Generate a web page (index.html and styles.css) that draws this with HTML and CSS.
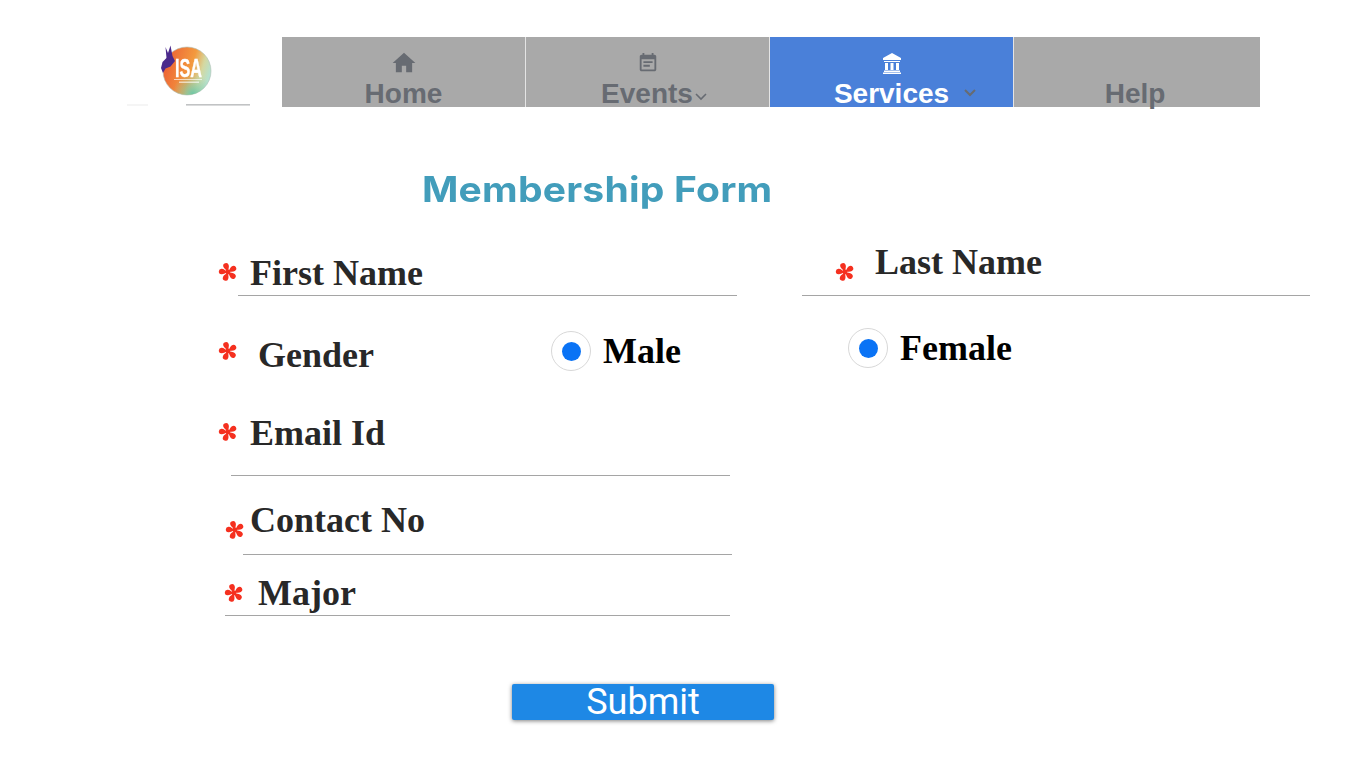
FILE: index.html
```html
<!DOCTYPE html>
<html lang="en">
<head>
<meta charset="utf-8">
<title>Membership Form</title>
<link rel="stylesheet" href="styles.css">
</head>
<body>
<svg class="defs" width="0" height="0" aria-hidden="true">
  <defs>
    <path id="lobe" d="M0 0C-.9-2.200-2.900-4.500-2.800-6.400A2.800 2.800 0 1 1 2.800-6.400C2.900-4.500.9-2.200 0 0z"/>
    <symbol id="star" viewBox="-10 -10 20 20">
      <circle r="2.400"/>
      <use href="#lobe" transform="rotate(-18)"/>
      <use href="#lobe" transform="rotate(58)"/>
      <use href="#lobe" transform="rotate(130)"/>
      <use href="#lobe" transform="rotate(202)"/>
      <use href="#lobe" transform="rotate(274)"/>
    </symbol>
  </defs>
</svg>
<header class="top">
  <div class="logo">
    <svg class="logo-art" width="124" height="70" viewBox="0 0 124 70">
      <defs>
        <linearGradient id="disc" x1="0" y1="0.2" x2="1" y2="0.5">
          <stop offset="0" stop-color="#ec5a34"/>
          <stop offset="0.6" stop-color="#f39a3e"/>
          <stop offset="0.82" stop-color="#d5d8a0"/>
          <stop offset="1" stop-color="#b4e2d0"/>
        </linearGradient>
        <radialGradient id="mint" cx="0.62" cy="0.98" r="0.42">
          <stop offset="0" stop-color="#6fc6a4"/>
          <stop offset="1" stop-color="#8fd4b8" stop-opacity="0"/>
        </radialGradient>
      </defs>
      <circle cx="61" cy="34" r="24" fill="url(#disc)" stroke="#aebdb4" stroke-width="0.6"/>
      <circle cx="61" cy="34" r="24" fill="url(#mint)"/>
      <path d="M39.500 10L42 16 44.500 8.500 46.500 19 49 24 44.500 29.500 39.500 31.500 37 36 35 31 36.500 25 40.500 21z" fill="#4b2a8c"/>
      <text x="62.500" y="39.500" class="logo-word" textLength="27" lengthAdjust="spacingAndGlyphs">ISA</text>
      <rect x="48" y="42" width="28" height="0.8" fill="#fff" opacity="0.8"/>
      <rect x="53" y="44.500" width="20" height="1.500" fill="#fff" opacity="0.6"/>
      <rect x="1" y="67.500" width="21" height="1" fill="#ececec"/>
      <rect x="60" y="67.500" width="64" height="0.8" fill="#84888a"/>
    </svg>
  </div>
  <nav class="nav">
    <a class="nav-item">
      <svg class="ico" width="26" height="26" viewBox="0 0 24 24"><path d="M10 20.500v-6h4v6h5.500V12h3L12 2.500 1.500 12h3v8.500z" fill="#676b72"/></svg>
      <span class="nav-text">Home</span>
    </a>
    <a class="nav-item">
      <svg class="ico" width="22" height="22" viewBox="0 0 24 24"><path d="M17 10H7v2h10v-2zm2-7h-1V1h-2v2H8V1H6v2H5c-1.110 0-1.990.9-1.990 2L3 19c0 1.100.89 2 2 2h14c1.100 0 2-.9 2-2V5c0-1.100-.9-2-2-2zm0 16H5V8h14v11zm-5-5H7v2h7v-2z" fill="#676b72"/></svg>
      <span class="nav-text text-events">Events<svg class="chev-tight" width="14" height="10" viewBox="0 0 14 10"><path d="M2 2l5 5 5-5" fill="none" stroke="#676b72" stroke-width="1.600"/></svg></span>
    </a>
    <a class="nav-item active">
      <svg class="ico" width="22" height="22" viewBox="0 0 22 22"><path d="M11 1L2 6v2h18V6zM3 9v1h16V9zM4 11h3v7H4zM9.500 11h3v7h-3zM15 11h3v7h-3zM3 18.500h16V20H3zM2 20.500h18V22H2z" fill="#fff"/></svg>
      <span class="nav-text text-services">Services<svg class="chev-wide" width="14" height="10" viewBox="0 0 14 10"><path d="M2 2l5 5 5-5" fill="none" stroke="#676b72" stroke-width="2"/></svg></span>
    </a>
    <a class="nav-item">
      <span class="ico-space"></span>
      <span class="nav-text text-help">Help</span>
    </a>
  </nav>
</header>

<main class="form">
  <h1 class="title">Membership Form</h1>

  <div class="pair row-names">
    <div class="field field-first">
      <svg class="star"><use href="#star"/></svg>
      <label class="label">First Name</label>
    </div>
    <div class="field field-last">
      <svg class="star"><use href="#star"/></svg>
      <label class="label">Last Name</label>
    </div>
  </div>

  <div class="pair row-gender">
    <div class="gender">
      <svg class="star"><use href="#star"/></svg>
      <span class="label">Gender</span>
      <span class="choice choice-male"><span class="radio"><span class="dot"></span></span><span class="choice-text">Male</span></span>
    </div>
    <div class="gender-right">
      <span class="choice"><span class="radio"><span class="dot"></span></span><span class="choice-text">Female</span></span>
    </div>
  </div>

  <div class="stack row-email">
    <div class="stack-head"><svg class="star"><use href="#star"/></svg><label class="label">Email Id</label></div>
    <div class="line line-email"></div>
  </div>

  <div class="stack row-contact">
    <div class="stack-head"><svg class="star"><use href="#star"/></svg><label class="label">Contact No</label></div>
    <div class="line line-contact"></div>
  </div>

  <div class="stack row-major">
    <div class="stack-head"><svg class="star"><use href="#star"/></svg><label class="label">Major</label></div>
    <div class="line line-major"></div>
  </div>

  <div class="actions"><button class="submit" type="button">Submit</button></div>
</main>
</body>
</html>
```
FILE: styles.css
```css
* { box-sizing: border-box; }
html, body { margin: 0; padding: 0; background: #fff; }
body { height: 760px; overflow: hidden; font-family: "Liberation Serif", serif; }
.defs { display: block; height: 0; }

.top { display: flex; margin: 37px 0 0 126px; height: 70px; }
.logo { width: 156px; height: 70px; }
.logo-art { display: block; filter: blur(0.4px); }
.logo-word { font: 700 26px "Liberation Sans", sans-serif; fill: #fff; stroke: #fff; stroke-width: 0.4px; text-anchor: middle; }

.nav { display: flex; width: 978px; height: 70px; background: #a9a9a9; }
.nav-item { width: 244px; height: 70px; display: flex; flex-direction: column; align-items: center; border-right: 1px solid #e4e4e4; }
.nav-item:last-child { border-right: 0; width: 246px; }
.nav-item.active { background: #4a80d9; }
.nav-item.active .nav-text { color: #fff; }
.ico { display: block; flex: none; margin-top: 13px; height: 26px; }
.ico-space { display: block; flex: none; height: 39px; }
.nav-text { flex: none; font: 700 28px/32px "Liberation Sans", sans-serif; color: #676b72; white-space: nowrap; margin-top: 2px; }
.text-events { margin-left: 14px; }
.text-services { margin-left: 28px; }
.text-help { margin-right: 4px; }
.chev-tight { margin-left: 1px; vertical-align: 1px; }
.chev-wide { margin-left: 14px; vertical-align: 5px; }

.form { display: block; }
.title { width: 312px; margin: 60px 0 0 422px; height: 44px; font: 700 35px/44px Inter, sans-serif; letter-spacing: 0.2px; color: #429dbb; white-space: nowrap; transform: scaleX(1.115); transform-origin: left center; }

.label { font: 700 36px/42px "Liberation Serif", serif; color: #282828; white-space: nowrap; }
.star { display: block; flex: none; width: 20px; height: 20px; fill: #f5301f; }

.pair { display: flex; }
.row-names { margin: 26px 0 0 218px; height: 59px; }
.field { display: flex; align-items: flex-start; }
.field-first { width: 519px; position: relative; padding-top: 15px; }
.field-first::after { content: ""; position: absolute; left: 20px; right: 0; bottom: 0; height: 1px; background: #a5a5a5; }
.field-first .star { margin-top: 10px; }
.field-first .label { margin-left: 12px; }
.field-last { width: 508px; margin-left: 65px; padding: 4px 0 0 33px; border-bottom: 1px solid #a5a5a5; }
.field-last .star { margin-top: 21px; }
.field-last .label { margin-left: 20px; }

.row-gender { margin: 33px 0 0 218px; height: 42px; }
.gender { width: 630px; display: flex; align-items: center; }
.gender .label { margin-left: 20px; width: 293px; position: relative; top: 5px; }
.gender .star { margin-top: 2px; }
.choice { display: flex; align-items: center; }
.choice-male { margin-top: 2px; }
.radio { flex: none; width: 40px; height: 40px; border: 1px solid #d8d8d8; border-radius: 50%; display: flex; align-items: center; justify-content: center; }
.dot { width: 19px; height: 19px; border-radius: 50%; background: #0a73f5; }
.choice-text { margin-left: 12px; font: 700 36px/42px "Liberation Serif", serif; color: #000; white-space: nowrap; }
.gender-right { display: flex; align-items: center; margin-top: -2px; height: 42px; }

.stack { display: block; }
.stack-head { display: flex; height: 42px; }
.line { height: 1px; background: #a5a5a5; }

.row-email { margin: 41px 0 0 218px; }
.row-email .star { margin-top: 10px; }
.row-email .label { margin-left: 12px; }
.line-email { width: 499px; margin: 21px 0 0 13px; }

.row-contact { margin: 23px 0 0 225px; }
.row-contact .star { margin-top: 21px; }
.row-contact .label { margin-left: 5px; }
.line-contact { width: 489px; margin: 13px 0 0 18px; }

.row-major { margin: 17px 0 0 224px; }
.row-major .star { margin-top: 11px; }
.row-major .label { margin-left: 14px; }
.line-major { width: 505px; margin: 1px 0 0 1px; }

.actions { margin: 68px 0 0 512px; }
.submit { display: block; width: 262px; height: 36px; padding: 0; border: 0; border-radius: 2px; background: #1e88e5; color: #fff; font: 400 36px/36px Roboto, sans-serif; box-shadow: 0 1px 4px rgba(0,0,0,.5); }
```
